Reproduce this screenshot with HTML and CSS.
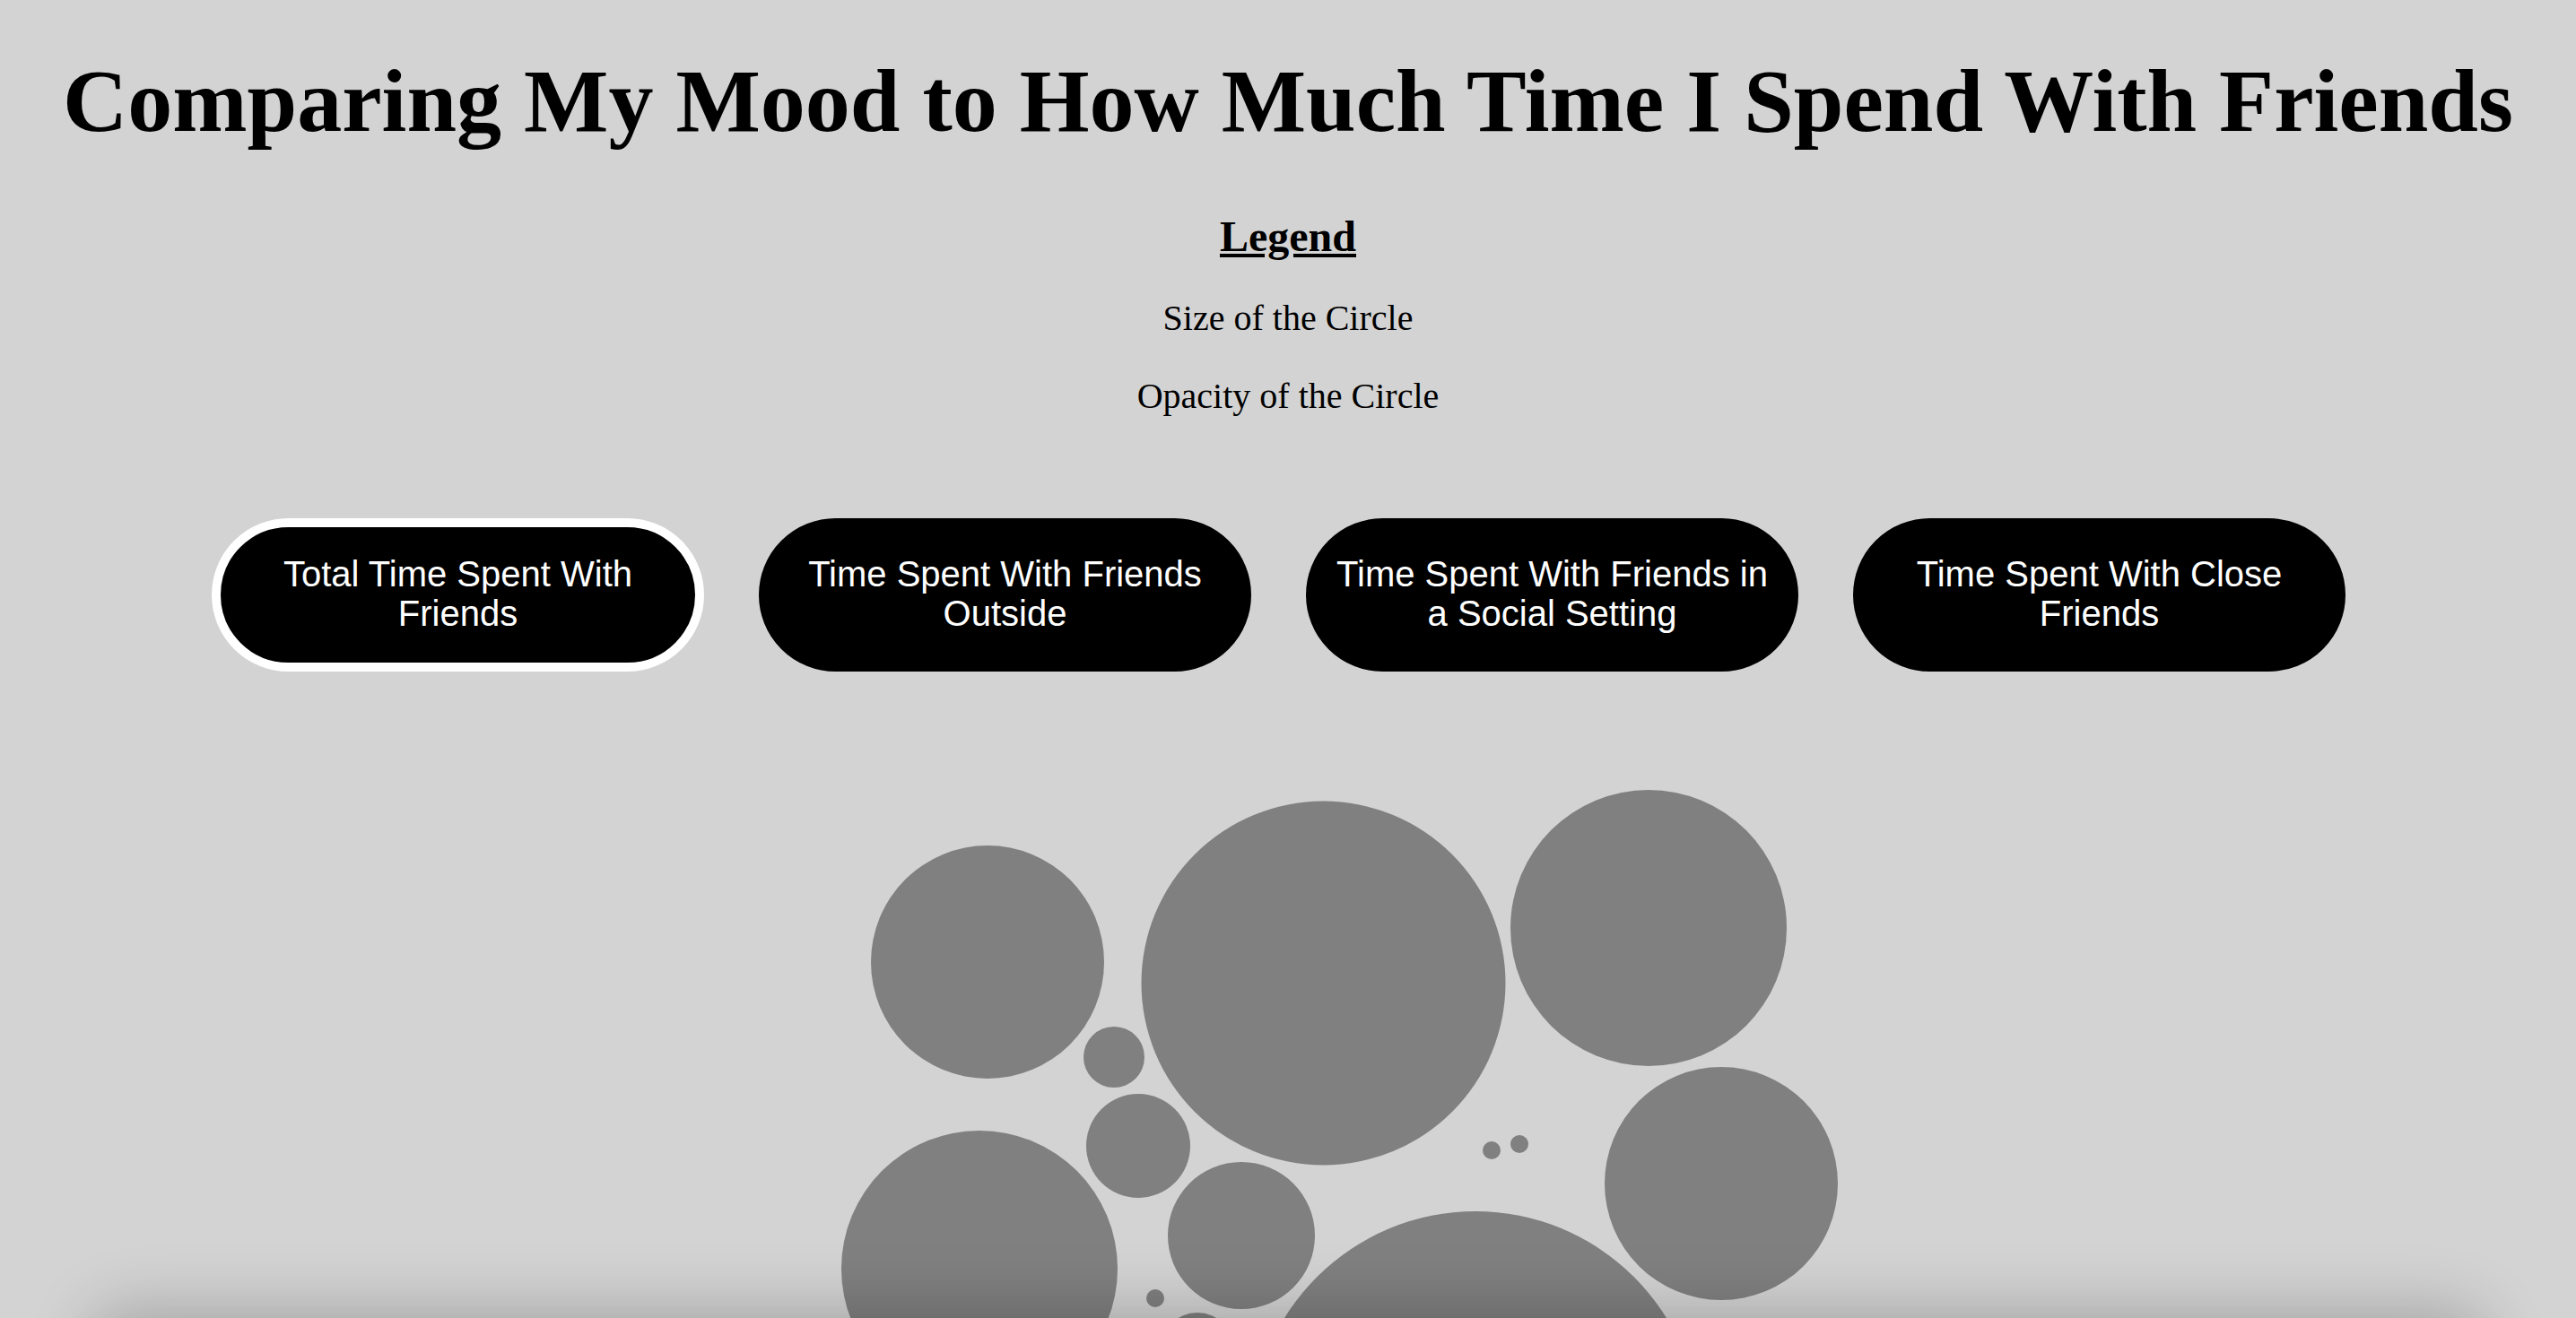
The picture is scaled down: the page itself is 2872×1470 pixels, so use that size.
FILE: index.html
```html
<!DOCTYPE html>
<html lang="en">
<head>
<meta charset="utf-8">
<title>Comparing My Mood to How Much Time I Spend With Friends</title>
<link rel="stylesheet" href="styles.css">
</head>
<body>
<h1 class="title">Comparing My Mood to How Much Time I Spend With Friends</h1>
<section class="legend">
  <h3 class="legend-title">Legend</h3>
  <p class="legend-item">Size of the Circle</p>
  <p class="legend-item">Opacity of the Circle</p>
</section>
<nav class="buttons">
  <button class="btn active">Total Time Spent With Friends</button>
  <button class="btn">Time Spent With Friends Outside</button>
  <button class="btn">Time Spent With Friends in a Social Setting</button>
  <button class="btn">Time Spent With Close Friends</button>
</nav>
<svg class="chart" width="2872" height="900" viewBox="0 0 2872 900">
  <g class="bubbles">
    <circle cx="1101" cy="273" r="130"/>
    <circle cx="1475.5" cy="296.5" r="203"/>
    <circle cx="1838" cy="235" r="154"/>
    <circle cx="1242" cy="379" r="34"/>
    <circle cx="1269" cy="478" r="58"/>
    <circle cx="1384" cy="578" r="82"/>
    <circle cx="1092" cy="615" r="154"/>
    <circle cx="1919" cy="520" r="130"/>
    <circle cx="1645" cy="801" r="250"/>
    <circle cx="1663" cy="483" r="10"/>
    <circle cx="1694" cy="476" r="10"/>
    <circle cx="1288" cy="648" r="10"/>
    <circle cx="1335" cy="706" r="42"/>
  </g>
</svg>
<div class="tooltip"></div>
</body>
</html>
```
FILE: styles.css
```css
html, body {
  margin: 0;
  padding: 0;
  background: #d3d3d3;
  color: #000;
  font-family: "Liberation Serif", "Times New Roman", serif;
  overflow: hidden;
}

.title {
  margin: 55px 0 0 0;
  font-size: 100px;
  font-weight: bold;
  text-align: center;
}

.legend {
  margin-top: 66px;
  text-align: center;
}

.legend-title {
  margin: 0 0 40px 0;
  font-size: 48px;
  font-weight: bold;
  text-decoration: underline;
}

.legend-item {
  margin: 40px 0 0 0;
  font-size: 40px;
}

.legend-title + .legend-item {
  margin-top: 0;
}

.buttons {
  display: flex;
  gap: 61px;
  padding-left: 236px;
  margin-top: 113px;
}

.btn {
  box-sizing: border-box;
  width: 549px;
  height: 171px;
  border: 10px solid #000;
  border-radius: 86px;
  background: #000;
  color: #fff;
  font-family: "Liberation Sans", Arial, sans-serif;
  font-size: 40px;
  line-height: 44px;
  text-align: center;
  padding: 0 10px 4px 10px;
  display: flex;
  align-items: center;
  justify-content: center;
}

.btn.active {
  border-color: #fff;
}

.chart {
  display: block;
  margin-top: 51px;
}

.bubbles circle {
  fill: #808080;
}

.tooltip {
  position: fixed;
  left: 110px;
  right: 110px;
  bottom: -220px;
  height: 220px;
  border-radius: 30px;
  background: #d3d3d3;
  box-shadow: 0 0 70px 10px rgba(0, 0, 0, 0.22);
}
```
